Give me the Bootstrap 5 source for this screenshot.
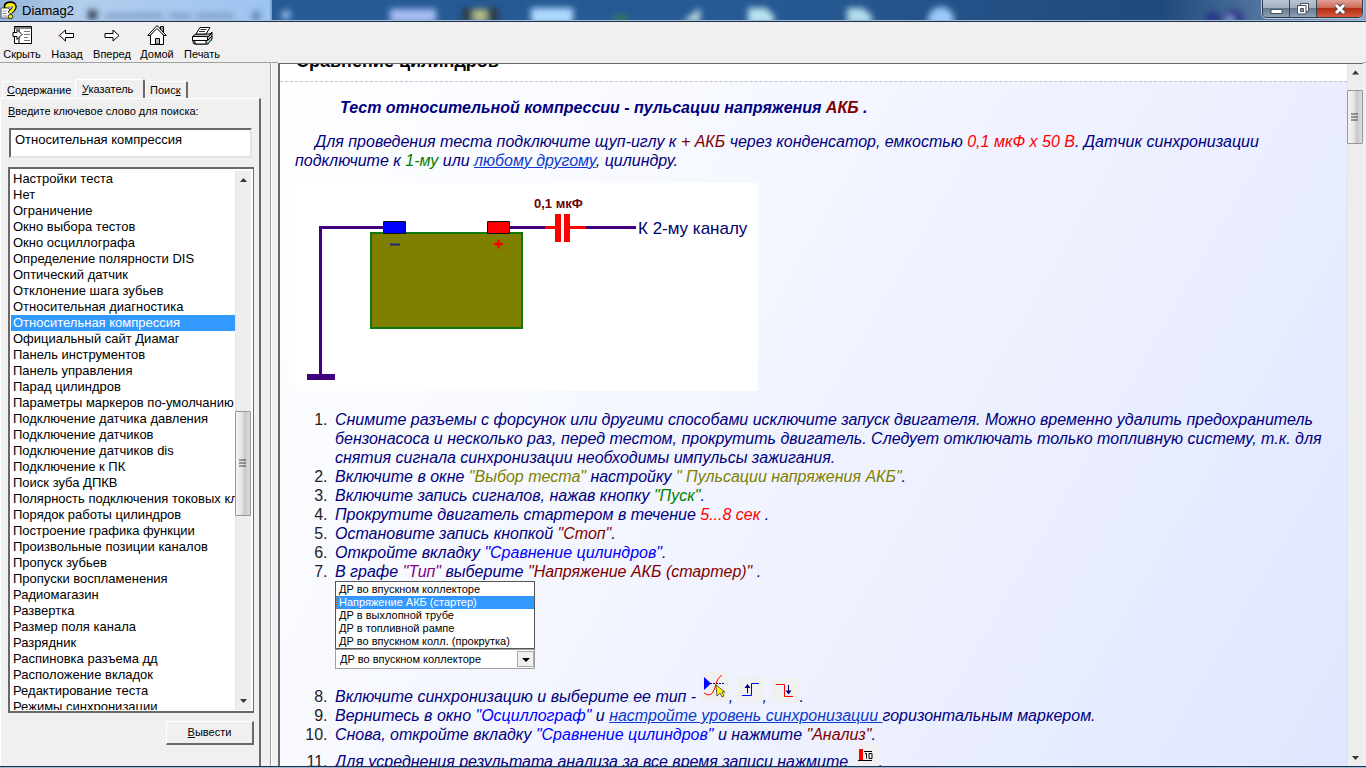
<!DOCTYPE html>
<html lang="ru">
<head>
<meta charset="utf-8">
<meta name="viewport" content="width=device-width, initial-scale=1">
<title>Diamag2</title>
<link href="https://cdn.jsdelivr.net/npm/bootstrap@5.3.0/dist/css/bootstrap.min.css" rel="stylesheet">
<script src="https://cdn.jsdelivr.net/npm/bootstrap@5.3.0/dist/js/bootstrap.bundle.min.js" defer></script>
<style>
body{font-family:"Liberation Sans",Arial,sans-serif;font-size:11px;line-height:16px;color:#000;background:#f0f0f0}
.titlebar{height:22px;background:#265a94;border-bottom:1px solid #1c2f4c;box-shadow:inset 0 -1px #a9bdd6}
.titlebar .glass{z-index:0}
.titlebar .caption{font-size:13px;z-index:1}
.winbtns{z-index:1;border:1px solid #2b3a50;border-top:0;border-radius:0 0 5px 5px;height:18px;margin-right:3px;overflow:hidden;box-shadow:0 0 0 1px #b8c8da}
.winbtns button{border:0;border-right:1px solid #34455e;padding:0;width:27px;background:linear-gradient(#b9c5d2,#a0afc1 45%,#66798f 50%,#8fa3b8)}
.winbtns button.shut{width:45px;border-right:0;background:linear-gradient(#dfa195,#cf6a58 45%,#b52c14 50%,#d4593a)}
.toolbar{height:40px}
.toolbar button{width:45px;border:0;background:none;padding:0 1px 2px 0}
.toolbar svg{display:block;height:24px}
.sidepane{width:271px;border-right:1px solid #a0a0a0;border-top:1px solid #a0a0a0}
.sidebody{width:261px}
.tabrow{padding:16px 0 0 2px}
.tabrow button{border:1px solid #fff;border-bottom:0;border-right:2px solid #696969;border-radius:2px 2px 0 0;background:#f0f0f0;height:17px;padding:0 4px;line-height:17px}
.tabrow button.first{border-right:0;width:73px}
.tabrow button.active{height:20px;width:70px;margin-bottom:-1px;padding:0 6px}
.tabrow button.last{width:43px}
.tabpanel{border:1px solid #fff;border-right:2px solid #696969;border-bottom:0;padding:4px 5px 21px 7px}
.tabpanel label{margin-bottom:9px}
.sunken{border:2px solid #696969;border-right-color:#e3e3e3;border-bottom-color:#e3e3e3;background:#fff}
.keyinput{height:30px;font-size:13px;padding:0 4px 7px;margin-left:1px;width:243px}
.keylist{border:2px solid #696969;border-right-width:1px;padding:2px 2px 1px 1px;margin-top:9px;overflow:hidden;background:#fff}
.keylist .list-group{font-size:13px;overflow:hidden}
.keylist .list-group-item{border:0;padding:0 2px;line-height:16px;height:16px;white-space:nowrap;flex-shrink:0;color:#000;background:#fff;overflow:hidden}
.keylist .list-group-item.active{background:#3399ff;color:#fff;margin:0}
.sbar{width:16px;background:#eee;border-left:1px solid #e3e3e3;flex-shrink:0}
.sbar svg{display:block}
.sthumb{border:1px solid #979797;border-radius:1px;background:linear-gradient(90deg,#f4f4f4,#e4e4e6 45%,#c8c8cc 60%,#dcdcde);margin-left:-1px}
.leadgap{height:220px}
.sidethumb{height:105px}
.pagethumb{height:54px;margin-top:10px}
.showbtn{width:88px;height:24px;border:1px solid #fff;border-right:2px solid #696969;border-bottom:2px solid #696969;background:#f0f0f0;margin-top:8px;padding:0 0 2px}
.splitter{width:7px;border-left:1px solid #fff;border-top:1px solid #a0a0a0}
.viewer{border:solid #696969;border-width:1px 0 0 2px;margin-top:1px;background:#fff}
.viewer article{font-size:16px;line-height:19px;color:#000080;font-style:italic;background:linear-gradient(120deg,#fff 0%,#f7f9ff 30%,#ebefff 68%,#dfe6ff 100%)}
.pagehead{height:17px;overflow:hidden;background:#fff;padding-left:16px}
.pagehead h1{font-size:18px;line-height:22px;font-weight:700;margin:-14px 0 0;color:#000}
.pagehead-rule{border-bottom:1px dashed #bfc4cc}
.content{padding:16px 15px 0}
.content h2{font-size:16px;line-height:19px;font-weight:700;padding-left:45px;margin:0 0 15px}
.intro{text-indent:20px;margin-bottom:13px}
.content svg.scheme{display:block;margin-bottom:19px}
.steps{padding-left:37px;margin:0}
.steps li{padding-left:3px}
.steps li::marker{font-style:normal;color:#222}
.steps svg{vertical-align:baseline}
.content a{color:#0a3acb}
.maroon{color:#800000}.redtxt{color:#f00}.greentxt{color:#008000}.olive{color:#808000}.bluetxt{color:#00f}.purple{color:#800080}
.combo{width:200px;font-style:normal;font-size:11px;line-height:13px;color:#000;margin-bottom:3px}
.combo ul{border:1px solid #555;background:#fff;padding:1px 0 0}
.combo li{padding:0 3px;height:13px}
.combo li.on{background:#39f;color:#fff;outline:1px dotted #c76a1e;outline-offset:-1px}
.combo .form-select{font-size:11px;line-height:13px;height:20px;border:1px solid #a0a0a0;border-radius:0;padding:0 20px 0 4px;background-color:#fff;background-image:none;color:#000}
.combo .arrow{right:1px;top:2px;width:17px;height:16px;background:#f0f0f0;border:1px solid #aaa;pointer-events:none}
.edge{width:3px;border-top:1px solid #a0a0a0}
.footline{height:2px;border-top:1px solid #22344c;background:#9db8d6}
</style>
</head>
<body class="vh-100 d-flex flex-column overflow-hidden">
<header class="titlebar d-flex position-relative overflow-hidden flex-shrink-0">
  <svg class="glass position-absolute top-0 start-0" width="100%" height="20" aria-hidden="true">
    <defs>
      <linearGradient id="tg" x2="1"><stop offset="0" stop-color="#93b4da"/><stop offset=".3" stop-color="#b3cdec"/><stop offset="1" stop-color="#9dc4f2"/></linearGradient>
      <linearGradient id="bg" x2="1"><stop offset="0" stop-color="#265a96"/><stop offset=".55" stop-color="#265a94"/><stop offset=".85" stop-color="#204a7c"/><stop offset=".95" stop-color="#6284aa"/><stop offset="1" stop-color="#8ba6c4"/></linearGradient>
      <filter id="bl" x="-30%" y="-60%" width="160%" height="220%"><feGaussianBlur stdDeviation="3"/></filter>
    </defs>
    <rect width="100%" height="20" fill="url(#bg)"/>
    <rect width="271" height="20" fill="url(#tg)"/>
    <rect x="270" width="2" height="20" fill="#7fa6d3"/>
    <g filter="url(#bl)">
      <rect x="88" y="10" width="9" height="10" fill="#35445a"/>
      <path d="M105 16h58M169 16h22M196 16h38" stroke="#7c9cc3" stroke-width="5"/>
      <path d="M253 12l6 8m0-8l-6 8" stroke="#4d6d94" stroke-width="3"/>
      <circle cx="286" cy="15" r="5" fill="#8db5e4"/>
      <rect x="390" y="9" width="46" height="14" fill="#a6bdf2"/>
      <rect x="462" y="8" width="37" height="14" fill="#2b3c49"/><rect x="473" y="10" width="14" height="12" fill="#b4bd8d"/>
      <rect x="531" y="8" width="42" height="16" fill="#add9ff"/>
      <circle cx="620" cy="22" r="8" fill="#31765f"/>
      <path d="M682 22l18-14v14z" fill="#c0dce4"/>
      <path d="M748 8h18l8 8v8h-26z" fill="#b9e4ef"/>
      <path d="M847 8h16l9 8v8h-25z" fill="#b3dded"/>
      <circle cx="941" cy="20" r="13" fill="#9ac9fa"/>
      <circle cx="1213" cy="19" r="8" fill="#253b88"/><circle cx="1234" cy="19" r="10" fill="#333d8e"/><circle cx="1230" cy="20" r="4" fill="#8aa2dc"/>
    </g>
  </svg>
  <div class="caption d-flex align-items-center position-relative flex-fill">
    <svg width="18" height="21" viewBox="0 0 18 21" aria-hidden="true"><path d="M1 8h7l2 2v8H1z" fill="#fff" stroke="#555"/><path d="M2.500 11h4m-4 2.500h4m-4 2.500h5" stroke="#888"/><path d="M6 8V5.500Q7 3.500 10.500 3.500t4 3q0 2.500-4 5.500v1" fill="none" stroke="#000" stroke-width="4.500"/><path d="M6.500 7.500q0-3 4-3t3.500 2.500q0 2-3.500 5v1" fill="none" stroke="#ffee12" stroke-width="2.800"/><circle cx="10.500" cy="16.500" r="2.200" fill="#ffee12" stroke="#000" stroke-width=".8"/></svg>
    <span class="ms-1">Diamag2</span>
  </div>
  <div class="winbtns d-flex position-relative">
    <button type="button" aria-label="Свернуть"><svg class="d-block mx-auto" width="13" height="16"><rect x="1" y="8.500" width="11" height="4" fill="#fff" stroke="#47505e"/></svg></button>
    <button type="button" aria-label="Восстановить"><svg class="d-block mx-auto" width="14" height="16"><path d="M4.500 2.500h8v8h-8z" fill="#fff" stroke="#47505e"/><path d="M1.500 4.500h8.500v8.500H1.500z" fill="#fff" stroke="#47505e"/><path d="M4.500 7.500h3v3h-3z" fill="#8c9aad" stroke="#47505e"/></svg></button>
    <button type="button" class="shut" aria-label="Закрыть"><svg class="d-block mx-auto" width="14" height="16"><path d="M3 4l8 8m0-8l-8 8" stroke="#47404c" stroke-width="5"/><path d="M3 4l8 8m0-8l-8 8" stroke="#fff" stroke-width="3"/></svg></button>
  </div>
</header>

<nav class="toolbar d-flex flex-shrink-0">
  <button type="button"><svg class="mx-auto" width="22" height="24" viewBox="0 0 22 24"><path d="M3.500 4.500h17v17h-17z" fill="#fff" stroke="#000"/><path d="M4 6h16M8 7v14" stroke="#000"/><path d="M13 9.500h6m-6 3h6m-6 3h4m-4 3h6" stroke="#777"/><path d="M2 10.500h4V7.500l5 5-5 5v-3H2z" fill="#fff" stroke="#000"/></svg>Скрыть</button>
  <button type="button"><svg class="mx-auto" width="18" height="24" viewBox="0 0 18 24"><path d="M1.500 13.500l6-5.500v3.500h8v4h-8V19z" fill="#fff" stroke="#000"/><path d="M1 12.500v2" stroke="#e44" /></svg>Назад</button>
  <button type="button"><svg class="mx-auto" width="18" height="24" viewBox="0 0 18 24"><path d="M16 13.500L10 8v3.500H2v4h8V19z" fill="#fff" stroke="#000"/></svg>Вперед</button>
  <button type="button"><svg class="mx-auto" width="20" height="24" viewBox="0 0 20 24"><path d="M13.500 8V4.500h3V11" fill="#999" stroke="#000"/><path d="M3.500 13v9.500h13V13L10 5z" fill="#fff" stroke="#000"/><path d="M.8 13.500L10 3.500l9.200 10H17l-7-7-7 7z" fill="#fff" stroke="#000"/><path d="M8.500 22v-5.500h4V22z" fill="#bbb" stroke="#000"/></svg>Домой</button>
  <button type="button"><svg class="mx-auto" width="22" height="24" viewBox="0 0 22 24"><path d="M2 14l3-2h14l2-2v7l-4 5H3l-1-2z" fill="#bbb" stroke="#000"/><path d="M5 12l4-6.500h10L15 12z" fill="#fff" stroke="#000"/><path d="M9.500 7.500h6m-7.500 2h6" stroke="#333"/><path d="M1.500 14.500h15v4h-15z" fill="#fff" stroke="#000"/><path d="M3.500 18.500h11l1 3.500h-11z" fill="#fff" stroke="#000"/><path d="M17 15l4-4m-4 7l4-4" stroke="#000"/><path d="M18 21l3-3" stroke="#2cb3b3"/></svg>Печать</button>
</nav>

<main class="d-flex flex-fill overflow-hidden">
  <aside class="sidepane d-flex flex-shrink-0">
    <div class="sidebody d-flex flex-column ps-0">
      <div class="tabrow d-flex align-items-end flex-shrink-0" role="tablist">
        <button type="button" class="first text-start" role="tab"><u>С</u>одержание</button>
        <button type="button" class="active text-start" role="tab" aria-selected="true"><u>У</u>казатель</button>
        <button type="button" class="last text-start" role="tab">Поис<u>к</u></button>
      </div>
      <div class="tabpanel d-flex flex-column flex-fill overflow-hidden ms-0">
        <label for="key"><u>В</u>ведите ключевое слово для поиска:</label>
        <input id="key" type="text" class="sunken keyinput flex-shrink-0" value="Относительная компрессия">
        <div class="keylist d-flex flex-fill">
          <div class="list-group list-group-flush rounded-0 flex-fill">
            <button type="button" class="list-group-item text-start">Настройки теста</button>
            <button type="button" class="list-group-item text-start">Нет</button>
            <button type="button" class="list-group-item text-start">Ограничение</button>
            <button type="button" class="list-group-item text-start">Окно выбора тестов</button>
            <button type="button" class="list-group-item text-start">Окно осциллографа</button>
            <button type="button" class="list-group-item text-start">Определение полярности DIS</button>
            <button type="button" class="list-group-item text-start">Оптический датчик</button>
            <button type="button" class="list-group-item text-start">Отклонение шага зубьев</button>
            <button type="button" class="list-group-item text-start">Относительная диагностика</button>
            <button type="button" class="list-group-item text-start active">Относительная компрессия</button>
            <button type="button" class="list-group-item text-start">Официальный сайт Диамаг</button>
            <button type="button" class="list-group-item text-start">Панель инструментов</button>
            <button type="button" class="list-group-item text-start">Панель управления</button>
            <button type="button" class="list-group-item text-start">Парад цилиндров</button>
            <button type="button" class="list-group-item text-start">Параметры маркеров по-умолчанию</button>
            <button type="button" class="list-group-item text-start">Подключение датчика давления</button>
            <button type="button" class="list-group-item text-start">Подключение датчиков</button>
            <button type="button" class="list-group-item text-start">Подключение датчиков dis</button>
            <button type="button" class="list-group-item text-start">Подключение к ПК</button>
            <button type="button" class="list-group-item text-start">Поиск зуба ДПКВ</button>
            <button type="button" class="list-group-item text-start">Полярность подключения токовых клещей</button>
            <button type="button" class="list-group-item text-start">Порядок работы цилиндров</button>
            <button type="button" class="list-group-item text-start">Построение графика функции</button>
            <button type="button" class="list-group-item text-start">Произвольные позиции каналов</button>
            <button type="button" class="list-group-item text-start">Пропуск зубьев</button>
            <button type="button" class="list-group-item text-start">Пропуски воспламенения</button>
            <button type="button" class="list-group-item text-start">Радиомагазин</button>
            <button type="button" class="list-group-item text-start">Развертка</button>
            <button type="button" class="list-group-item text-start">Размер поля канала</button>
            <button type="button" class="list-group-item text-start">Разрядник</button>
            <button type="button" class="list-group-item text-start">Распиновка разъема дд</button>
            <button type="button" class="list-group-item text-start">Расположение вкладок</button>
            <button type="button" class="list-group-item text-start">Редактирование теста</button>
            <button type="button" class="list-group-item text-start">Режимы синхронизации</button>
          </div>
          <div class="sbar d-flex flex-column">
            <svg class="flex-shrink-0" width="15" height="20"><path d="M4 11l3.500-4 3.500 4z" fill="#333"/></svg>
            <div class="leadgap flex-shrink-1"></div>
            <div class="sthumb sidethumb d-flex align-items-center flex-shrink-0"><svg class="mx-auto" width="8" height="9"><path d="M0 1h7m-7 3h7m-7 3h7" stroke="#444"/></svg></div>
            <svg class="mt-auto flex-shrink-0" width="15" height="18"><path d="M4 7l3.500 4L11 7z" fill="#333"/></svg>
          </div>
        </div>
        <button type="button" class="showbtn align-self-end flex-shrink-0"><u>В</u>ывести</button>
      </div>
    </div>
  </aside>
  <div class="splitter flex-shrink-0"></div>
  <section class="viewer d-flex flex-fill overflow-hidden">
    <article class="flex-fill overflow-hidden">
      <div class="pagehead fst-normal"><h1>Сравнение цилиндров</h1></div>
      <div class="pagehead-rule"></div>
      <div class="content">
        <h2>Тест относительной компрессии - пульсации напряжения <span class="maroon">АКБ</span> .</h2>
        <p class="intro">Для проведения теста подключите щуп-иглу к <span class="maroon">+ АКБ</span> через конденсатор, емкостью <span class="redtxt">0,1 мкФ х 50 В</span>. Датчик синхронизации подключите к <span class="greentxt">1-му</span> или <a href="#other">любому другому</a>, цилиндру.</p>
        <svg class="scheme" width="463" height="208" viewBox="0 0 463 208" role="img" aria-label="Схема подключения к АКБ">
          <rect width="463" height="208" fill="#fff"/>
          <path d="M90 44.500H25.500V192M210 44.500h42M282 44.500h59" fill="none" stroke="#400080" stroke-width="3"/>
          <path d="M12 191h28v6H12z" fill="#400080"/>
          <path d="M76 50h151v95H76z" fill="#808000" stroke="#107810" stroke-width="2"/>
          <path d="M88.500 38.500h22v12h-22z" fill="#00f" stroke="#111"/><path d="M192.500 38.500h22v12h-22z" fill="#f00" stroke="#111"/>
          <path d="M95 61.500h10" stroke="#24247a" stroke-width="2"/><path d="M199 61h9m-4.500-4.500v9" stroke="#f00" stroke-width="2.500"/>
          <path d="M250 44.500h12m12 0h17" stroke="#f00" stroke-width="3"/><path d="M260 31h6v28h-6zM269 31h6v28h-6z" fill="#f00"/>
          <text x="239" y="25" font-family="Liberation Sans" font-size="13" font-weight="700" font-style="normal" fill="#700000">0,1 мкФ</text>
          <text x="343" y="51" font-family="Liberation Sans" font-size="17" font-style="normal" fill="#000070">К 2-му каналу</text>
        </svg>
        <ol class="steps">
          <li>Снимите разъемы с форсунок или другими способами исключите запуск двигателя. Можно временно удалить предохранитель бензонасоса и несколько раз, перед тестом, прокрутить двигатель. Следует отключать только топливную систему, т.к. для снятия сигнала синхронизации необходимы импульсы зажигания.</li>
          <li>Включите в окне <span class="olive">"Выбор теста"</span> настройку <span class="olive">" Пульсации напряжения АКБ"</span>.</li>
          <li>Включите запись сигналов, нажав кнопку <span class="greentxt">"Пуск"</span>.</li>
          <li>Прокрутите двигатель стартером в течение <span class="redtxt">5...8 сек</span> .</li>
          <li>Остановите запись кнопкой <span class="maroon">"Стоп"</span>.</li>
          <li>Откройте вкладку <span class="bluetxt">"Сравнение цилиндров"</span>.</li>
          <li>В графе <span class="purple">"Тип"</span> выберите <span class="maroon">"Напряжение АКБ (стартер)"</span> .
            <div class="combo">
              <ul class="list-unstyled m-0">
                <li>ДР во впускном коллекторе</li>
                <li class="on">Напряжение АКБ (стартер)</li>
                <li>ДР в выхлопной трубе</li>
                <li>ДР в топливной рампе</li>
                <li>ДР во впускном колл. (прокрутка)</li>
              </ul>
              <div class="position-relative">
                <select class="form-select" aria-label="Тип"><option>ДР во впускном коллекторе</option></select>
                <svg class="arrow position-absolute" viewBox="0 0 15 14"><path d="M4 6h8l-4 4z" fill="#000"/></svg>
              </div>
            </div>
          </li>
          <li>Включите синхронизацию и выберите ее тип - <svg width="28" height="30" viewBox="0 0 28 30"><path d="M0 0h28v30H0z" fill="#f0f0f0"/><path d="M3 5l7 6.500L3 18z" fill="#00f"/><path d="M9 11.500h15" stroke="#000080" stroke-dasharray="2 1"/><path d="M3 21q7 5 10-3l3-9q3-6 5-5" fill="none" stroke="#f00"/><path d="M15 13l1 11 3-3 2 4 2-1-2-4h3z" fill="#ff0" stroke="#333" stroke-width=".8"/></svg>, <svg width="25" height="26" viewBox="0 0 25 26"><path d="M0 0h25v26H0z" fill="#f0f0f0"/><path d="M4 19.500h9.500v-12H21" fill="none" stroke="#00f"/><path d="M9.500 17V9" stroke="#000080"/><path d="M6.500 12l3-4 3 4z" fill="#000080"/></svg>, <svg width="28" height="24" viewBox="0 0 28 24"><path d="M0 0h28v24H0z" fill="#f0f0f0"/><path d="M5 6.500h8.500v12H22" fill="none" stroke="#f00"/><path d="M17.500 7v8" stroke="#000080"/><path d="M14.500 12.500h6l-3 4z" fill="#000080"/></svg>.</li>
          <li>Вернитесь в окно <span class="bluetxt">"Осциллограф"</span> и <a href="#level">настройте уровень синхронизации </a>горизонтальным маркером.</li>
          <li>Снова, откройте вкладку <span class="bluetxt">"Сравнение цилиндров"</span> и нажмите <span class="maroon">"Анализ"</span>.</li>
          <li>Для усреднения результата анализа за все время записи нажмите <svg width="26" height="23" viewBox="0 0 26 23"><path d="M0 0h26v23H0z" fill="#f0f0f0"/><path d="M6 5h4v11H6z" fill="#f00"/><path d="M5 16.500h14M11 7.500h8M12 9.500h1.500v5M16 9.500h3v5h-3z" fill="none" stroke="#000"/></svg>.</li>
        </ol>
      </div>
    </article>
    <div class="sbar d-flex flex-column">
      <svg class="flex-shrink-0" width="15" height="16"><path d="M4 10.500l3.500-4 3.500 4z" fill="#333"/></svg>
      <div class="sthumb pagethumb d-flex align-items-center flex-shrink-0"><svg class="mx-auto" width="8" height="9"><path d="M0 1h7m-7 3h7m-7 3h7" stroke="#444"/></svg></div>
      <svg class="mt-auto flex-shrink-0" width="15" height="16"><path d="M4 6l3.500 4L11 6z" fill="#333"/></svg>
    </div>
  </section>
  <div class="edge flex-shrink-0"></div>
</main>
<footer class="footline flex-shrink-0"></footer>
</body>
</html>
